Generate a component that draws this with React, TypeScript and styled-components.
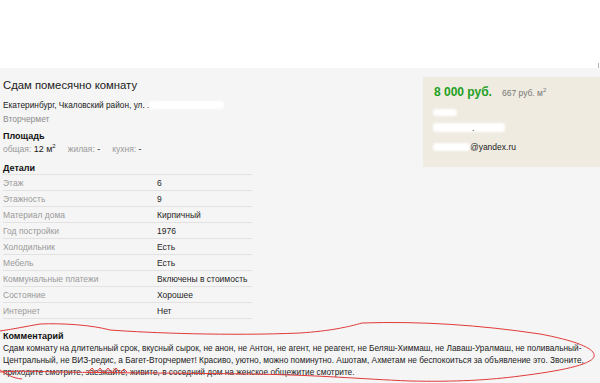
import styled, { createGlobalStyle } from "styled-components";

const GlobalStyle = createGlobalStyle`
  html, body {
    margin: 0;
    padding: 0;
    background: #ffffff;
  }
  body {
    font-family: "Liberation Sans", Arial, sans-serif;
    color: #222222;
  }
`;

const details = [
  { label: "Этаж", value: "6" },
  { label: "Этажность", value: "9" },
  { label: "Материал дома", value: "Кирпичный" },
  { label: "Год постройки", value: "1976" },
  { label: "Холодильник", value: "Есть" },
  { label: "Мебель", value: "Есть" },
  { label: "Коммунальные платежи", value: "Включены в стоимость" },
  { label: "Состояние", value: "Хорошее" },
  { label: "Интернет", value: "Нет" },
];

const commentLines = [
  "Сдам комнату на длительный срок, вкусный сырок, не анон, не Антон, не агент, не реагент, не Беляш-Химмаш, не Лаваш-Уралмаш, не поливальный-",
  "Центральный, не ВИЗ-редис, а Багет-Вторчермет! Красиво, уютно, можно поминутно. Ашотам, Ахметам не беспокоиться за объявление это. Звоните,",
  "приходите смотрите, заезжайте, живите, в соседний дом на женское общежитие смотрите.",
];

const App = () => {
  return (
    <>
      <GlobalStyle />
      <Page>
        <TopBar>
          <Mark />
        </TopBar>
        <Main>
          <Columns>
            <Info>
              <Title>Сдам помесячно комнату</Title>
              <Address>
                Екатеринбург, Чкаловский район, ул. .
                <Blur w={75} h={8} />
              </Address>
              <District>Вторчермет</District>
              <SectionTitle top={4}>Площадь</SectionTitle>
              <AreaLine>
                <AreaItem>
                  общая: <b>12 м<sup>2</sup></b>
                </AreaItem>
                <AreaItem>
                  жилая: <b>-</b>
                </AreaItem>
                <AreaItem>
                  кухня: <b>-</b>
                </AreaItem>
              </AreaLine>
              <SectionTitle top={6}>Детали</SectionTitle>
              <Table>
                {details.map((d) => (
                  <Row key={d.label}>
                    <Label>{d.label}</Label>
                    <Value>{d.value}</Value>
                  </Row>
                ))}
              </Table>
            </Info>
            <Aside>
              <PriceLine>
                <Price>8 000 руб.</Price>
                <PerMeter>
                  667 руб. м<sup>2</sup>
                </PerMeter>
              </PriceLine>
              <ContactLine top={8}>
                <Blur w={24} h={7} />
              </ContactLine>
              <ContactLine top={7}>
                <Blur w={72} h={9} />
                <Dot>.</Dot>
              </ContactLine>
              <Email>
                <Blur w={37} h={8} />
                @yandex.ru
              </Email>
            </Aside>
          </Columns>
          <Comment>
            <CommentTitle>Комментарий</CommentTitle>
            <CommentText>
              {commentLines.map((line) => (
                <CommentLine key={line}>{line}</CommentLine>
              ))}
            </CommentText>
          </Comment>
        </Main>
        <Scribble viewBox="0 0 600 383" width="600" height="383">
          <path
            d="M0 331 C14 329 28 326 40 324 C62 323 92 325 110 330 C150 333 230 336 300 333 C330 331 348 327 362 323 C420 321 480 325 540 334 C572 340 597 348 594 357 C590 365 560 371 520 376 C490 380 455 382 410 381 C360 379 320 375 250 374 C180 373 120 373 60 372 C30 371 12 371 0 372"
            fill="none"
            stroke="#e23a3a"
            strokeWidth="1"
          />
          <path
            d="M88 372 L92 368 L96 373 L100 368 L104 373 L108 368 L112 373 L116 368 L120 373 L124 369 L127 372"
            fill="none"
            stroke="#e23a3a"
            strokeWidth="1"
          />
          <path
            d="M0 370 C6 374 12 378 22 379"
            fill="none"
            stroke="#e23a3a"
            strokeWidth="1"
          />
        </Scribble>
      </Page>
    </>
  );
};

const Page = styled.div`
  position: relative;
  width: 600px;
  height: 383px;
  overflow: hidden;
  background: #f5f5f5;
`;

const TopBar = styled.div`
  display: flex;
  justify-content: flex-end;
  align-items: flex-end;
  height: 68px;
  background: #ffffff;
`;

const Mark = styled.div`
  width: 1px;
  height: 5px;
  margin-right: 1px;
  background: #b5b5b5;
`;

const Main = styled.div`
  padding: 0 2px 0 3px;
`;

const Columns = styled.div`
  display: flex;
  justify-content: space-between;
`;

const Info = styled.div`
  display: flex;
  flex-direction: column;
  width: 249px;
`;

const Title = styled.h1`
  margin: 9px 0 0 0;
  font-size: 11.3px;
  line-height: 16px;
  font-weight: 400;
  color: #1a1a1a;
`;

const Address = styled.div`
  display: flex;
  align-items: center;
  margin-top: 5px;
  font-size: 8.3px;
  line-height: 14px;
  color: #222222;
`;

const District = styled.div`
  font-size: 8.5px;
  line-height: 14px;
  color: #8c8c8c;
`;

const SectionTitle = styled.div<{ top: number }>`
  margin-top: ${(p) => p.top}px;
  font-size: 9px;
  line-height: 12px;
  font-weight: 700;
  color: #111111;
`;

const AreaLine = styled.div`
  display: flex;
  gap: 12px;
  font-size: 8.5px;
  line-height: 14px;
  color: #999999;

  b {
    font-weight: 400;
    color: #222222;
  }
  b:first-child {
    font-size: 9px;
  }
  sup {
    font-size: 6px;
    line-height: 0;
    vertical-align: 4px;
  }
`;

const AreaItem = styled.span``;

const Table = styled.div`
  display: flex;
  flex-direction: column;
  border-top: 1px solid #e2e2e2;
`;

const Row = styled.div`
  display: grid;
  grid-template-columns: 154px 1fr;
  height: 15px;
  align-items: center;
  border-bottom: 1px solid #e2e2e2;
  font-size: 8.5px;
  white-space: nowrap;
`;

const Label = styled.span`
  color: #9a9a9a;
`;

const Value = styled.span`
  color: #1e1e1e;
`;

const Aside = styled.div`
  display: flex;
  flex-direction: column;
  width: 166px;
  height: 90px;
  margin-top: 9px;
  margin-right: -2px;
  padding-left: 11px;
  box-sizing: content-box;
  background: #efebe1;
`;

const PriceLine = styled.div`
  display: flex;
  align-items: baseline;
  gap: 10px;
  margin-top: 7px;
  line-height: 16px;

  sup {
    font-size: 6px;
    line-height: 0;
    vertical-align: 4px;
  }
`;

const Price = styled.span`
  font-size: 12px;
  font-weight: 700;
  color: #23a023;
`;

const PerMeter = styled.span`
  font-size: 8.5px;
  color: #777777;
`;

const ContactLine = styled.div<{ top: number }>`
  display: flex;
  align-items: center;
  margin-top: ${(p) => p.top}px;
  margin-left: -1px;
`;

const Dot = styled.span`
  position: relative;
  margin-left: -33px;
  font-size: 9px;
  line-height: 6px;
  color: #333333;
`;

const Email = styled.div`
  display: flex;
  align-items: center;
  margin-top: 10px;
  margin-left: -1px;
  font-size: 8.5px;
  line-height: 10px;
  color: #222222;
`;

const Blur = styled.span<{ w: number; h: number }>`
  display: inline-block;
  width: ${(p) => p.w}px;
  height: ${(p) => p.h}px;
  background: #ffffff;
  border-radius: 3px;
  filter: blur(0.8px);
`;

const Comment = styled.div`
  margin-top: 12px;
`;

const CommentTitle = styled.div`
  font-size: 9px;
  line-height: 11px;
  font-weight: 700;
  color: #111111;
`;

const CommentText = styled.div`
  display: flex;
  flex-direction: column;
  font-size: 8.3px;
  line-height: 12px;
  color: #222222;
`;

const CommentLine = styled.span`
  white-space: nowrap;
`;

const Scribble = styled.svg`
  position: absolute;
  left: 0;
  top: 0;
  pointer-events: none;
`;

export default App;
